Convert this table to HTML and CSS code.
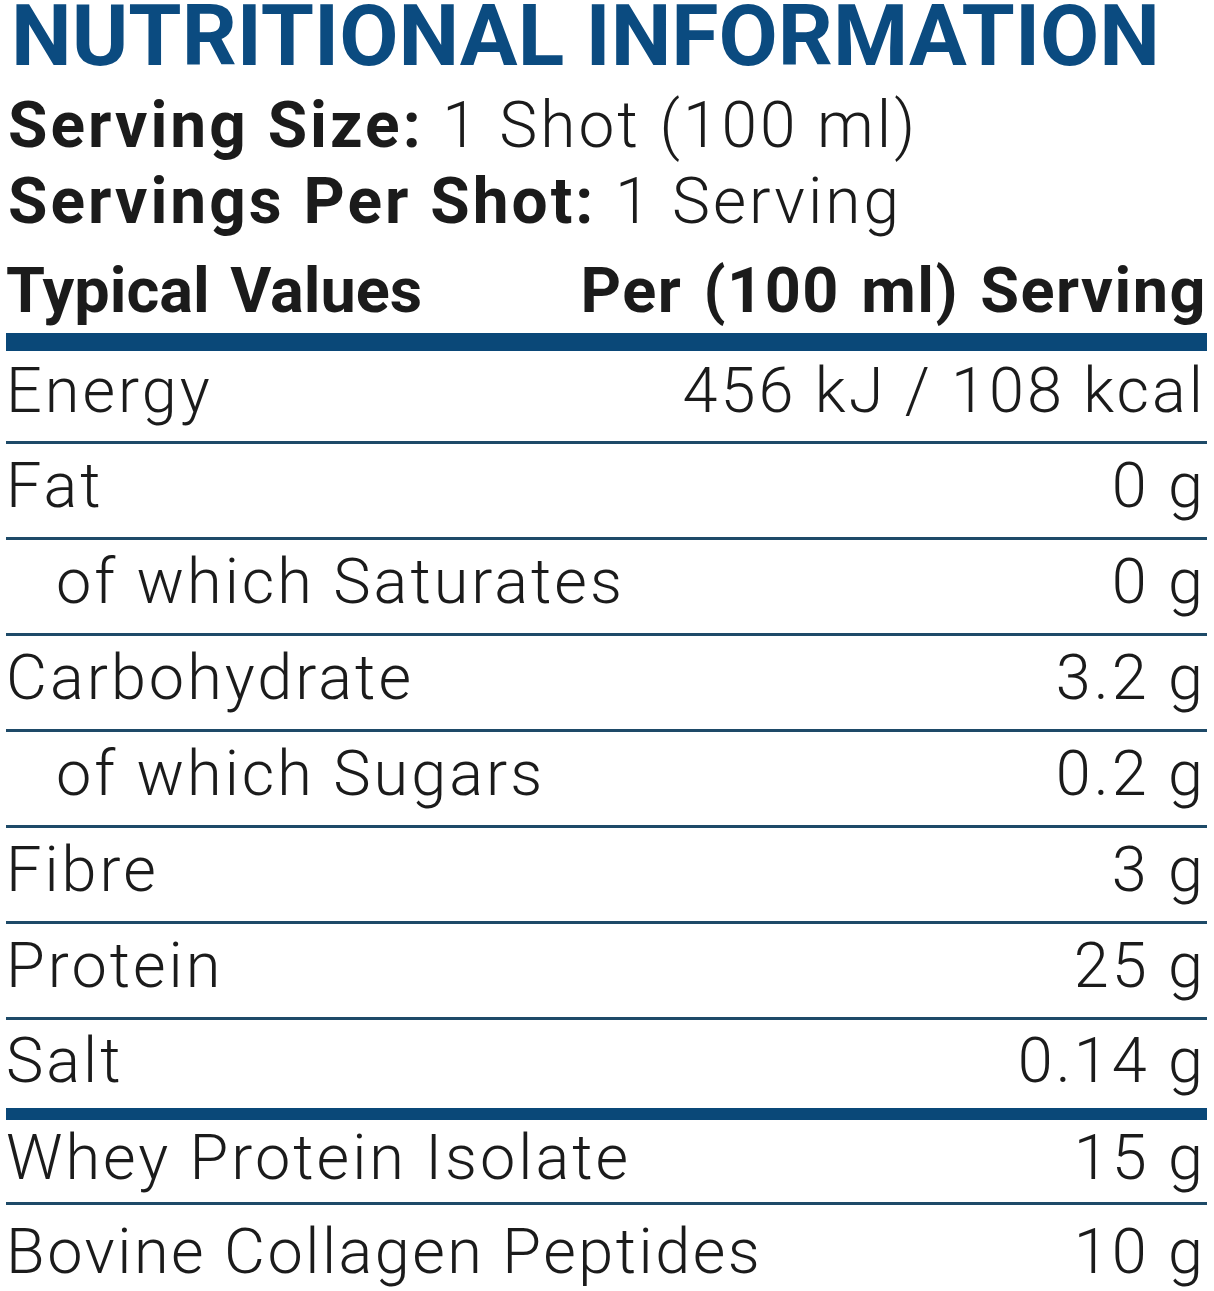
FILE: index.html
```html
<!DOCTYPE html>
<html lang="en">
<head>
<meta charset="utf-8">
<title>Nutritional Information</title>
<link rel="stylesheet" href="styles.css">
</head>
<body>
<main class="label">
  <h1 class="title">NUTRITIONAL INFORMATION</h1>
  <p class="serving"><b>Serving Size:</b> 1 Shot (100 ml)</p>
  <p class="serving"><b>Servings Per Shot:</b> 1 Serving</p>
  <div class="head">
    <span>Typical Values</span>
    <span class="head-per">Per (100 ml) Serving</span>
  </div>
  <div class="row row-energy"><span>Energy</span><span>456 kJ / 108 kcal</span></div>
  <div class="row"><span>Fat</span><span>0 g</span></div>
  <div class="row"><span class="sub">of which Saturates</span><span>0 g</span></div>
  <div class="row"><span>Carbohydrate</span><span>3.2 g</span></div>
  <div class="row"><span class="sub">of which Sugars</span><span>0.2 g</span></div>
  <div class="row"><span>Fibre</span><span>3 g</span></div>
  <div class="row"><span>Protein</span><span>25 g</span></div>
  <div class="row row-salt"><span>Salt</span><span>0.14 g</span></div>
  <div class="row row-whey"><span>Whey Protein Isolate</span><span>15 g</span></div>
  <div class="row row-last"><span class="long">Bovine Collagen Peptides</span><span>10 g</span></div>
</main>
</body>
</html>
```

FILE: styles.css
```css
html, body {
  margin: 0;
  padding: 0;
  background: #ffffff;
}

.label {
  width: 1201px;
  margin-left: 6px;
  font-family: Roboto, "Liberation Sans", sans-serif;
  color: #1b1b1b;
}

.title {
  margin: 0 0 0 5px;
  font-size: 86px;
  line-height: 71px;
  font-weight: 700;
  color: #0b4b80;
  white-space: nowrap;
}

.serving {
  margin: 0 0 0 2px;
  font-size: 64px;
  line-height: 76px;
  font-weight: 300;
  letter-spacing: 3px;
  white-space: nowrap;
}

.serving:first-of-type {
  margin-top: 17px;
}

.serving b {
  font-weight: 700;
}

.head {
  display: flex;
  justify-content: space-between;
  margin-top: 13px;
  padding: 0 0 4px 0;
  font-size: 63px;
  line-height: 76px;
  font-weight: 700;
  letter-spacing: 0;
  word-spacing: 5px;
  border-bottom: 18px solid #0a4878;
  white-space: nowrap;
}

.head-per {
  letter-spacing: 1.5px;
  word-spacing: 4px;
}

.row {
  display: flex;
  justify-content: space-between;
  padding: 0 1px 10px 0;
  font-size: 63px;
  line-height: 83px;
  font-weight: 300;
  letter-spacing: 3px;
  border-bottom: 3px solid #1e4a68;
  white-space: nowrap;
}

.row-energy {
  line-height: 79px;
  padding-bottom: 11px;
}

.row-salt {
  line-height: 81px;
  padding-bottom: 7px;
  border-bottom: 12px solid #0a4878;
}

.row-whey {
  line-height: 75px;
  padding-bottom: 7px;
}

.row-last {
  padding-top: 3px;
  line-height: 88px;
  padding-bottom: 0;
  border-bottom: none;
}

.long {
  letter-spacing: 2.5px;
}

.sub {
  padding-left: 50px;
}
```
